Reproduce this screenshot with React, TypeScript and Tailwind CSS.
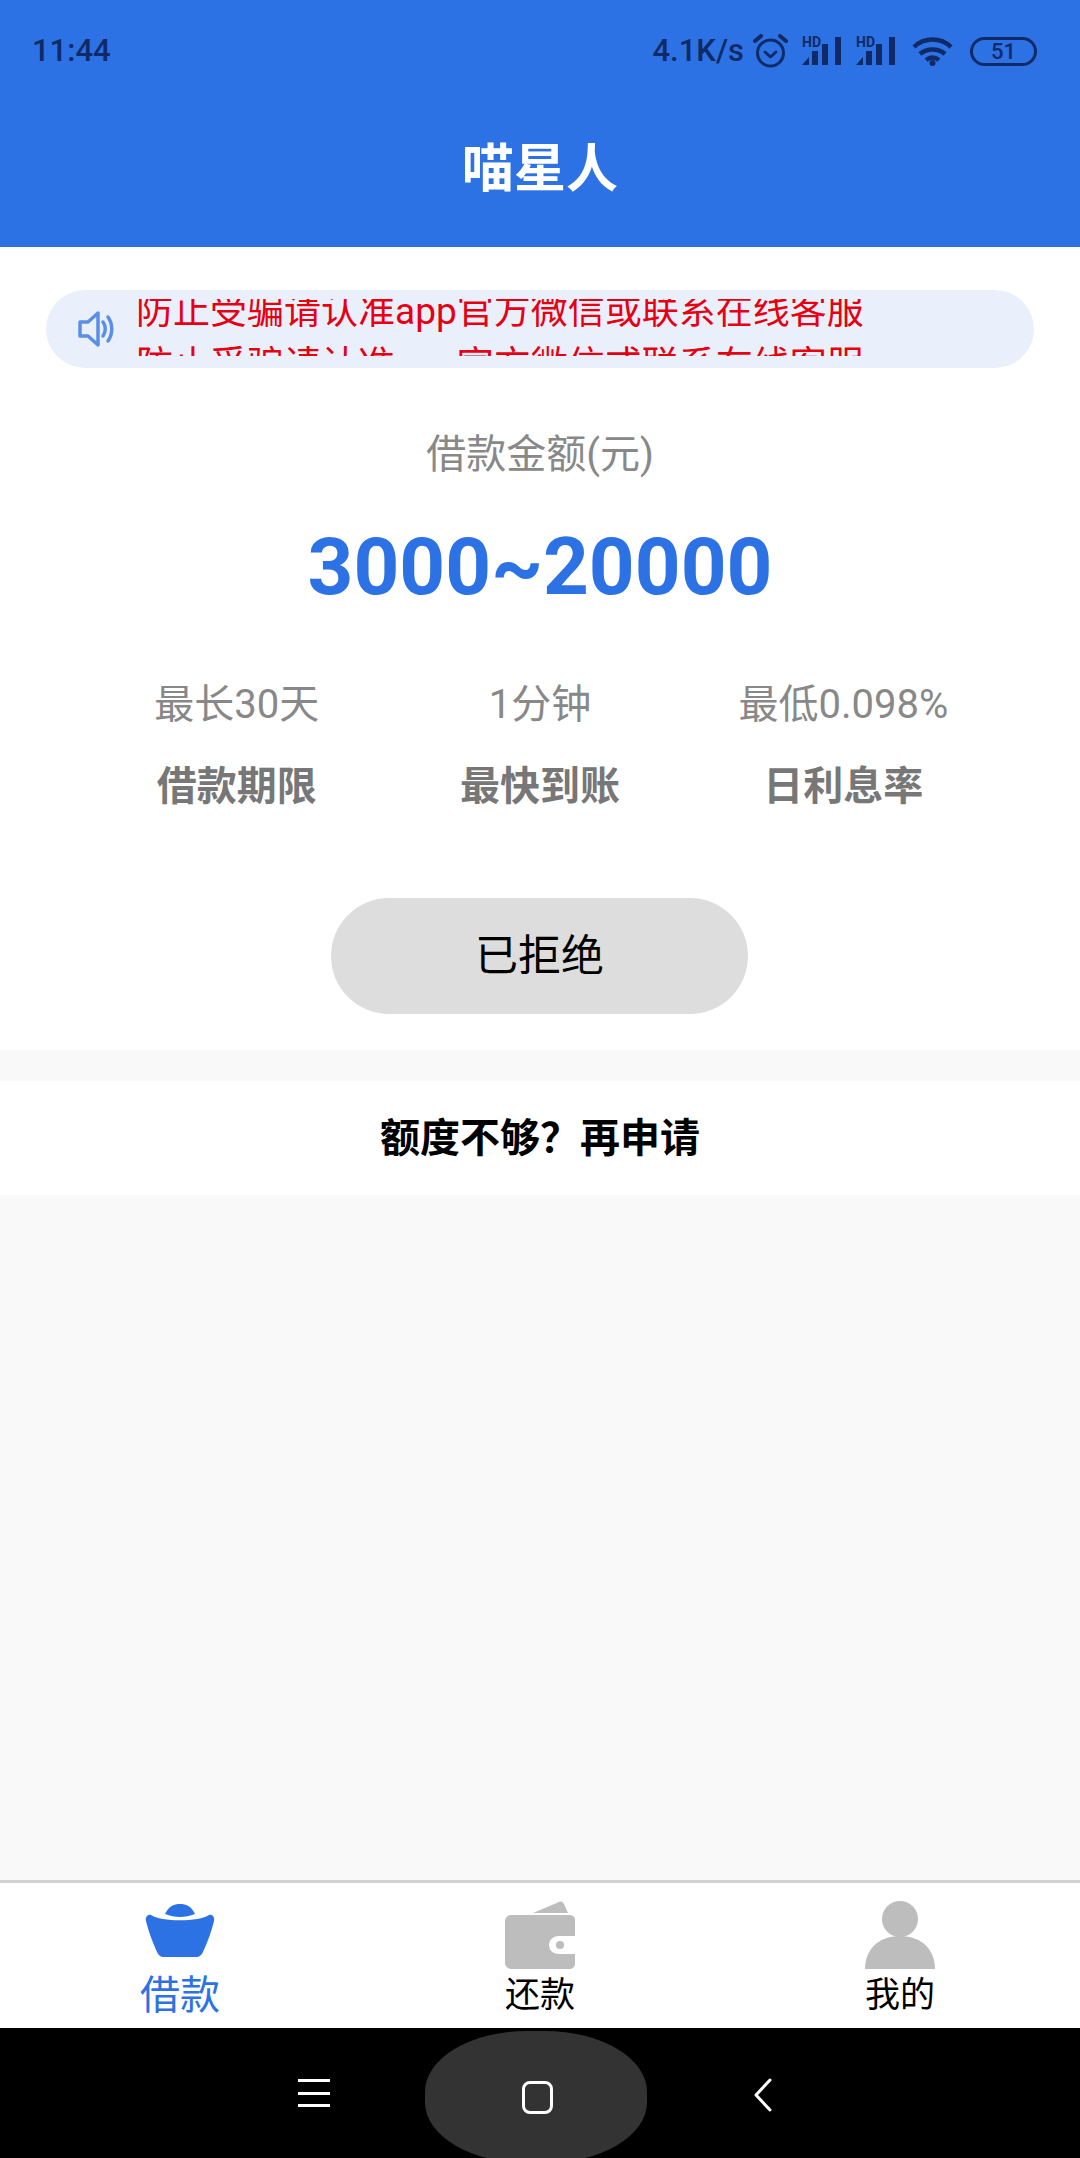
const fontStack = { fontFamily: '"Roboto", "Noto Sans CJK SC", sans-serif' };

const noticeText = "防止受骗请认准app官方微信或联系在线客服";

const stats = [
  { value: "最长30天", label: "借款期限" },
  { value: "1分钟", label: "最快到账" },
  { value: "最低0.098%", label: "日利息率" },
];

function SignalIcon() {
  return (
    <svg width="40" height="30" viewBox="0 0 40 30" fill="#0f2a66" className="overflow-visible">
      <text x="0" y="11" fontSize="14" fontWeight="700" fontFamily="Roboto, sans-serif">
        HD
      </text>
      <path d="M0 29l7-8v8z" />
      <rect x="10" y="15" width="6" height="14" />
      <rect x="20" y="8" width="6" height="21" />
      <rect x="33" y="1" width="6" height="28" />
    </svg>
  );
}

function StatusBar() {
  return (
    <div className="flex h-[100px] items-center justify-between pt-[2px] pl-[32px] pr-[43px] text-[#0f2a66]">
      <span className="text-[31px] font-medium">11:44</span>
      <div className="flex items-center">
        <span className="mr-[9px] text-[31px] font-medium">4.1K/s</span>
        <svg width="35" height="34" viewBox="0 0 35 34" fill="none" stroke="#0f2a66" strokeWidth="3" className="mr-[14px]">
          <circle cx="17.500" cy="19" r="13" />
          <path d="M12 18l5.500 5 5.500-5" strokeLinecap="round" strokeLinejoin="round" />
          <path d="M2 7l6-5M33 7l-6-5" strokeWidth="4" strokeLinecap="round" />
        </svg>
        <SignalIcon />
        <div className="w-[14px]" />
        <SignalIcon />
        <svg width="41" height="29" viewBox="0 0 41 29" fill="none" stroke="#0f2a66" strokeWidth="4.500" className="ml-[16px]">
          <path d="M2 10c10-10 27-10 37 0" />
          <path d="M8 17c7-6 18-6 25 0" />
          <path d="M14 23c4-3 9-3 13 0" />
          <circle cx="20.500" cy="26" r="3" fill="#0f2a66" stroke="none" />
        </svg>
        <div className="ml-[17px] flex h-[29px] w-[67px] items-center justify-center rounded-full border-[3px] border-[#0f2a66] text-[22px] font-medium">
          51
        </div>
      </div>
    </div>
  );
}

function SpeakerIcon() {
  return (
    <svg width="38" height="38" viewBox="0 0 38 38" fill="none" stroke="#5b8fe6" strokeWidth="3.500" strokeLinejoin="round">
      <path d="M2 12h8l10-9v32l-10-9H2z" />
      <path d="M25 12c3 4 3 10 0 14" strokeLinecap="round" />
      <path d="M30 7c5 7 5 17 0 24" strokeLinecap="round" />
    </svg>
  );
}

function Notice() {
  return (
    <div className="mx-[46px] mt-[43px] flex h-[78px] items-center rounded-full bg-[#eaf0fb]">
      <div className="ml-[32px] w-[58px] shrink-0">
        <SpeakerIcon />
      </div>
      <div className="mt-[9px] h-[57px] w-[760px] self-start overflow-hidden text-[37px] leading-[50px] text-[#e60012]">
        <div className="-mt-[12px]">{noticeText}</div>
        <div className="mt-[4px]">{noticeText}</div>
      </div>
    </div>
  );
}

function IngotIcon() {
  return (
    <svg width="70" height="54" viewBox="0 0 70 54" fill="#2d72e4">
      <path d="M20 11C24 3 29 1 35 1s11 2 15 10c-10 4-20 4-30 0z" />
      <path d="M6 12c10 7 48 7 58 0 3-1 6 2 5 6-2 9-6 20-11 31-2 4-4 5-7 5H19c-3 0-5-1-7-5C7 38 3 27 1 18c-1-4 2-7 5-6z" />
    </svg>
  );
}

function WalletIcon() {
  return (
    <svg width="70" height="68" viewBox="0 0 70 68" fill="#bdbdbd">
      <path d="M28 12L54 1c2-1 4 0 5 2l4 9z" />
      <path d="M6 14h58c3 0 6 2 6 4v17H54c-6 0-10 4-10 9s4 9 10 9h16v10c0 3-3 5-6 5H6c-3 0-6-3-6-6V20c0-3 3-6 6-6z" />
      <circle cx="55" cy="44" r="4" />
    </svg>
  );
}

function PersonIcon() {
  return (
    <svg width="70" height="68" viewBox="0 0 70 68" fill="#bdbdbd">
      <circle cx="35" cy="18" r="18" />
      <path d="M0 68c0-18 12-33 35-33s35 15 35 33z" />
    </svg>
  );
}

function TabBar() {
  return (
    <div className="flex h-[148px] border-t-[3px] border-[#d0d0d0] bg-white">
      <div className="flex flex-1 flex-col items-center pt-[20px]">
        <IngotIcon />
        <span className="mt-[13px] text-[40px] leading-[52px] text-[#2d72e4]">借款</span>
      </div>
      <div className="flex flex-1 flex-col items-center pt-[18px]">
        <WalletIcon />
        <span className="mt-[4px] text-[35px] leading-[46px] text-black">还款</span>
      </div>
      <div className="flex flex-1 flex-col items-center pt-[18px]">
        <PersonIcon />
        <span className="mt-[4px] text-[35px] leading-[46px] text-black">我的</span>
      </div>
    </div>
  );
}

function NavBar() {
  return (
    <div className="flex h-[130px] items-center overflow-hidden bg-black pl-[298px]">
      <div className="flex h-[28px] w-[32px] flex-col justify-between">
        <div className="h-[3px] bg-white" />
        <div className="h-[3px] bg-white" />
        <div className="h-[3px] bg-white" />
      </div>
      <div className="mt-[3px] ml-[95px] flex h-[132px] w-[222px] shrink-0 items-center justify-center self-start rounded-[46%] bg-[#333333]">
        <div className="ml-[2px] h-[33px] w-[31px] rounded-[8px] border-[3px] border-white" />
      </div>
      <svg width="20" height="34" viewBox="0 0 20 34" fill="none" stroke="white" strokeWidth="3" strokeLinecap="round" strokeLinejoin="round" className="mt-[3px] ml-[106px]">
        <path d="M17 2L3 17l14 15" />
      </svg>
    </div>
  );
}

export default function App() {
  return (
    <div className="flex h-[2158px] w-[1080px] flex-col bg-[#f9f9f9]" style={fontStack}>
      <header className="h-[247px] bg-[#2d72e4]">
        <StatusBar />
        <h1 className="mt-[33px] text-center text-[52px] leading-[74px] font-bold text-white">喵星人</h1>
      </header>

      <main className="flex h-[803px] flex-col bg-white">
        <Notice />
        <p className="mt-[60px] text-center text-[40px] leading-[54px] text-[#888888]">借款金额(元)</p>
        <p className="mt-[38px] text-center text-[80px] leading-[94px] font-bold text-[#2d72e4]">3000~20000</p>
        <div className="mt-[64px] grid grid-cols-3 px-[85px] text-center">
          {stats.map((item) => (
            <div key={item.label}>
              <p className="text-[40px] leading-[54px] text-[#888888]">{item.value}</p>
              <p className="mt-[28px] text-[40px] leading-[54px] font-bold text-[#777777]">{item.label}</p>
            </div>
          ))}
        </div>
        <button
          type="button"
          className="mt-[84px] ml-[331px] h-[116px] w-[417px] rounded-full bg-[#dddddd] text-[43px] text-black"
        >
          已拒绝
        </button>
      </main>

      <section className="mt-[31px] flex h-[114px] items-center justify-center bg-white pt-[2px] text-[40px] font-bold text-black">
        额度不够？再申请
      </section>

      <div className="flex-1" />
      <TabBar />
      <NavBar />
    </div>
  );
}
